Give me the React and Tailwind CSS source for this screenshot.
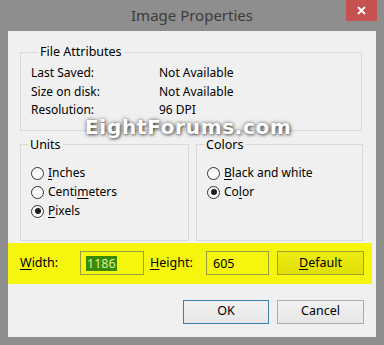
import React from "react";

const F = { fontFamily: '"Noto Sans", "Open Sans", sans-serif' };

function Radio({ checked }) {
  return (
    <span className="relative inline-block w-[13px] h-[13px] rounded-full border border-[#333] bg-gradient-to-b from-[#f4f4f4] to-white mr-[4px] shrink-0">
      {checked && (
        <span className="absolute left-[2.5px] top-[2.5px] w-[6px] h-[6px] rounded-full bg-[#1e1e1e]" />
      )}
    </span>
  );
}

function RadioRow({ checked, children }) {
  return (
    <div className="h-[19px] flex items-center pl-[10px]">
      <Radio checked={checked} />
      <span className="text-[12px] text-black leading-none">{children}</span>
    </div>
  );
}

function U({ children }) {
  return <span className="underline underline-offset-2">{children}</span>;
}

export default function App() {
  return (
    <div className="w-[384px] h-[345px] bg-[#8e8e8e] flex flex-col relative overflow-hidden" style={F}>
      <div className="h-[31px] relative flex items-center justify-center">
        <span className="text-[15px] text-[#3c3c3c] leading-none -mt-[1px]">Image Properties</span>
        <div className="absolute top-0 right-[7px] w-[31px] h-[21px] bg-[#c75050] flex items-center justify-center">
          <svg width="9" height="9" viewBox="0 0 9 9">
            <path d="M1 1 L8 8 M8 1 L1 8" stroke="white" strokeWidth="1.8" />
          </svg>
        </div>
      </div>
      <div className="ml-[8px] w-[368px] h-[306px] bg-[#f0f0f0] pt-[13px] flex flex-col text-[12px] text-black">
        <fieldset className="ml-[12px] w-[342px] border border-[#d9d9d9] pt-[4px] pb-[10px] pl-[10px]">
          <legend className="ml-[7px] px-[2px] leading-[16px] text-[12.5px]">File Attributes</legend>
          {[
            ["Last Saved:", "Not Available"],
            ["Size on disk:", "Not Available"],
            ["Resolution:", "96 DPI"],
          ].map(([a, b]) => (
            <div key={a} className="h-[18.5px] flex items-center">
              <span className="w-[128px]">{a}</span>
              <span>{b}</span>
            </div>
          ))}
        </fieldset>
        <div className="flex ml-[12px] mt-[6px] gap-[7px]">
          <fieldset className="w-[169px] h-[104px] border border-[#d9d9d9] pt-[11px]">
            <legend className="ml-[7px] px-[2px] leading-[16px] text-[12.5px]">Units</legend>
            <RadioRow><U>I</U>nches</RadioRow>
            <RadioRow>Centi<U>m</U>eters</RadioRow>
            <RadioRow checked><U>P</U>ixels</RadioRow>
          </fieldset>
          <fieldset className="w-[167px] h-[104px] border border-[#d9d9d9] pt-[11px]">
            <legend className="ml-[7px] px-[2px] leading-[16px] text-[12.5px]">Colors</legend>
            <RadioRow><U>B</U>lack and white</RadioRow>
            <RadioRow checked>Co<U>l</U>or</RadioRow>
          </fieldset>
        </div>
        <div className="mt-[2px] w-[364px] h-[41px] bg-[#f5f50e] flex items-center pl-[12px] text-[12.5px]">
          <span className="w-[60px]"><U>W</U>idth:</span>
          <div className="w-[64px] h-[24px] border border-[#9ba03a] flex items-center pl-[5px]">
            <span className="bg-[#3b8a06] text-[#d6f09a] leading-[15px] px-[1px]">1186</span>
          </div>
          <span className="ml-[6px] w-[56px]"><U>H</U>eight:</span>
          <div className="w-[63px] h-[24px] border border-[#9ba03a] flex items-center pl-[6px]">
            <span className="leading-[15px]">605</span>
          </div>
          <div className="ml-[8px] w-[87px] h-[24px] border border-[#a0a02a] bg-gradient-to-b from-[#ecec12] to-[#e0e008] flex items-center justify-center">
            <span><U>D</U>efault</span>
          </div>
        </div>
        <div className="mt-[16px] flex justify-end pr-[12px] gap-[8px] text-[12.5px]">
          <div className="w-[86px] h-[24px] border border-[#3c7fb1] bg-gradient-to-b from-[#f2f2f2] to-[#e6e6e6] flex items-center justify-center">OK</div>
          <div className="w-[87px] h-[24px] border border-[#acacac] bg-gradient-to-b from-[#f2f2f2] to-[#e6e6e6] flex items-center justify-center">Cancel</div>
        </div>
      </div>
      <div
        className="absolute left-[85px] top-[115px] text-[20px] leading-[24px] font-bold text-white tracking-[0.7px]"
        style={{ fontFamily: '"DejaVu Sans", sans-serif', textShadow: "0 0 4px rgba(0,0,0,0.55), 1px 1px 3px rgba(0,0,0,0.5)" }}
      >
        EightForums.com
      </div>
    </div>
  );
}
